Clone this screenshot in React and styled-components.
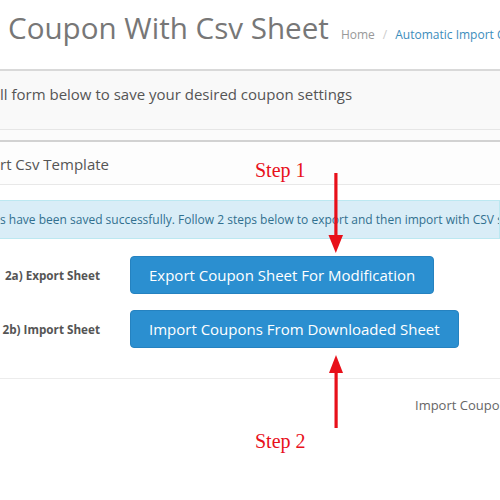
import styled, { createGlobalStyle } from "styled-components";

const GlobalStyle = createGlobalStyle`
    html, body {
        margin: 0;
        width: 500px;
        height: 500px;
        overflow: hidden;
        background: #fff;
        font-family: "Open Sans", "Liberation Sans", sans-serif;
    }
`;

const Page = styled.div`
    position: relative;
    width: 500px;
    height: 500px;
    overflow: hidden;
`;

const Header = styled.div`
    height: 71px;
    padding: 7px 0 0 8px;
    box-sizing: border-box;
    display: flex;
    align-items: baseline;
    white-space: nowrap;
    border-bottom: 2px solid #d9d9d9;
`;

const Title = styled.h1`
    margin: 0;
    font-size: 29.6px;
    font-weight: 400;
    color: #777;
`;

const Crumbs = styled.div`
    margin-left: 12px;
    font-size: 12px;
    color: #999;
    display: flex;
    gap: 8px;
`;

const CrumbLink = styled.span`
    color: #3c8dbc;
`;

const Slash = styled.span`
    color: #ccc;
`;

const Intro = styled.div`
    height: 59px;
    padding: 13px 0 0;
    box-sizing: border-box;
    background: #f9f9f9;
    border-bottom: 1px solid #e6e6e6;
    font-size: 15px;
    line-height: 20px;
    color: #555;
    white-space: nowrap;
`;

const Spacer = styled.div`
    height: 10px;
    background: #fbfbfb;
`;

const Box = styled.div`
    border-top: 2px solid #d2d2d2;
`;

const BoxHead = styled.div`
    height: 42px;
    line-height: 44px;
    font-size: 15px;
    color: #555;
    background: #fdfdfd;
    border-bottom: 1px solid #e8e8e8;
    white-space: nowrap;
`;

const BoxBody = styled.div`
    padding-top: 15px;
`;

const Alert = styled.div`
    height: 39px;
    box-sizing: border-box;
    line-height: 37px;
    background: #d9edf7;
    border: 1px solid #bce8f1;
    border-left: none;
    font-size: 12px;
    color: #31708f;
    white-space: nowrap;
    overflow: hidden;
`;

const Rows = styled.div`
    display: flex;
    flex-direction: column;
    gap: 16px;
    padding: 17px 0 30px;
    border-bottom: 1px solid #ececec;
`;

const Row = styled.div`
    display: flex;
    align-items: center;
    gap: 30px;
`;

const Label = styled.div`
    width: 100px;
    text-align: right;
    font-size: 11.7px;
    font-weight: 700;
    color: #555;
    white-space: nowrap;
`;

const Button = styled.button`
    height: 38px;
    padding: 0 18px;
    border: 1px solid #2582c0;
    border-radius: 4px;
    background: #2b8fd0;
    color: #fff;
    font-family: "Open Sans", "Liberation Sans", sans-serif;
    font-size: 15px;
    white-space: nowrap;
`;

const Footer = styled.div`
    padding: 17px 0 0 415px;
    font-size: 13px;
    color: #666;
    white-space: nowrap;
`;

const StepNote = styled.div`
    position: absolute;
    left: 255px;
    top: ${(p) => p.$top}px;
    font-family: "Liberation Serif", serif;
    font-size: 20px;
    line-height: 20px;
    color: #e8101a;
`;

const ArrowSvg = styled.svg`
    position: absolute;
    left: 326px;
    top: ${(p) => p.$top}px;
`;

const Arrow = ({ top, up }) => (
    <ArrowSvg $top={top} width="20" height="82" viewBox="0 0 20 82">
        {up ? (
            <>
                <polygon points="3,18 10,0 17,18" fill="#e8101a" />
                <rect x="8.5" y="16" width="3.2" height="57" fill="#e8101a" />
            </>
        ) : (
            <>
                <rect x="8.3" y="0" width="3.2" height="65" fill="#e8101a" />
                <polygon points="2.5,62 17,62 9.8,80" fill="#e8101a" />
            </>
        )}
    </ArrowSvg>
);

const App = () => {
    return (
        <Page>
            <GlobalStyle />
            <Header>
                <Title>Coupon With Csv Sheet</Title>
                <Crumbs>
                    <span>Home</span>
                    <Slash>/</Slash>
                    <CrumbLink>Automatic Import Coupons</CrumbLink>
                </Crumbs>
            </Header>
            <Intro>ll form below to save your desired coupon settings</Intro>
            <Spacer />
            <Box>
                <BoxHead>rt Csv Template</BoxHead>
                <BoxBody>
                    <Alert>
                        s have been saved successfully. Follow 2 steps below to export and then import with CSV sheet
                    </Alert>
                    <Rows>
                        <Row>
                            <Label>2a) Export Sheet</Label>
                            <Button>Export Coupon Sheet For Modification</Button>
                        </Row>
                        <Row>
                            <Label>2b) Import Sheet</Label>
                            <Button>Import Coupons From Downloaded Sheet</Button>
                        </Row>
                    </Rows>
                    <Footer>Import Coupons</Footer>
                </BoxBody>
            </Box>
            <StepNote $top={160}>Step 1</StepNote>
            <Arrow top={173} />
            <StepNote $top={431}>Step 2</StepNote>
            <Arrow top={355} up />
        </Page>
    );
};

export default App;
